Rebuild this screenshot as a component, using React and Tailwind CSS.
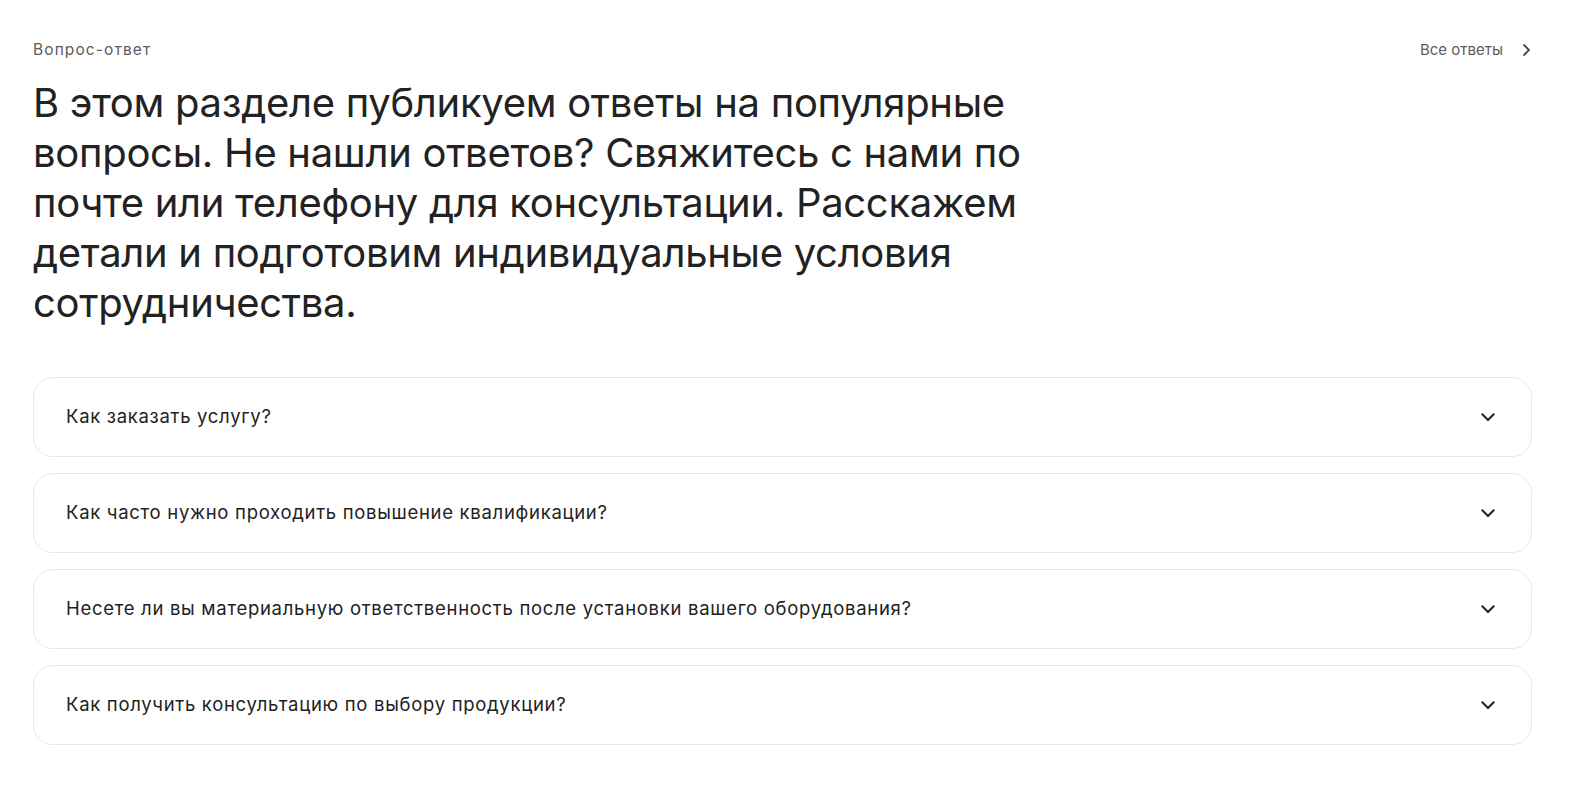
import React from "react";

const questions = [
  "Как заказать услугу?",
  "Как часто нужно проходить повышение квалификации?",
  "Несете ли вы материальную ответственность после установки вашего оборудования?",
  "Как получить консультацию по выбору продукции?",
];

function ChevronDown() {
  return (
    <svg width="16" height="16" viewBox="0 0 16 16" fill="none">
      <path d="M2.5 5.5 8 11l5.5-5.5" stroke="#222" strokeWidth="2" strokeLinecap="square" />
    </svg>
  );
}

function ChevronRight() {
  return (
    <svg width="12" height="16" viewBox="0 0 12 16" fill="none">
      <path d="M3.5 2.5 9 8l-5.5 5.5" stroke="#444" strokeWidth="1.8" />
    </svg>
  );
}

export default function App() {
  return (
    <div
      className="min-h-screen bg-white pl-[33px] pr-[39px] pt-[39px] text-[#222]"
      style={{ fontFamily: "Inter, 'Noto Sans', sans-serif" }}
    >
      <div className="flex items-center justify-between">
        <span className="text-[15.5px] leading-[22px] tracking-[1.1px] text-[#5c5c5c]">Вопрос-ответ</span>
        <a className="flex items-center gap-[17px] text-[15px] leading-[22px] tracking-[0px] text-[#5c5c5c]">
          Все ответы
          <ChevronRight />
        </a>
      </div>
      <h2 className="mt-[17px] w-[1020px] text-[40px] font-normal leading-[50px] tracking-[-0.3px] text-[#222]">
        В этом разделе публикуем ответы на популярные вопросы. Не нашли ответов? Свяжитесь с нами по почте или телефону для консультации. Расскажем детали и подготовим индивидуальные условия сотрудничества.
      </h2>
      <div className="mt-[49px] flex flex-col gap-[16px]">
        {questions.map((q) => (
          <div
            key={q}
            className="flex h-[80px] items-center justify-between rounded-[20px] border border-[#e6e6f2] pl-[32px] pr-[35px]"
          >
            <span className="text-[18.5px] tracking-[0.7px] text-[#222]">{q}</span>
            <ChevronDown />
          </div>
        ))}
      </div>
    </div>
  );
}
